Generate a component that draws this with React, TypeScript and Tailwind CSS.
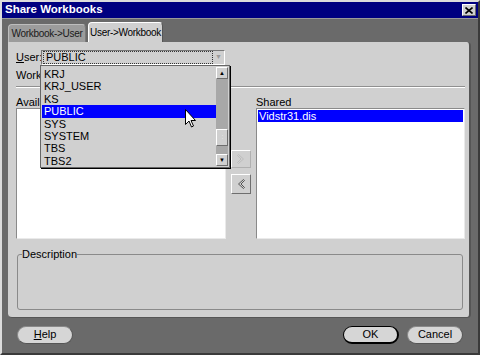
const users = ["KRJ", "KRJ_USER", "KS", "PUBLIC", "SYS", "SYSTEM", "TBS", "TBS2"];

function Bevel({ className = "", children }: { className?: string; children?: React.ReactNode }) {
  return (
    <div
      className={`border border-t-white border-l-white border-r-[#6e6e6e] border-b-[#6e6e6e] bg-[#d0d0d0] ${className}`}
    >
      {children}
    </div>
  );
}

function PillButton({ label, bold }: { label: React.ReactNode; bold?: boolean }) {
  return (
    <button
      className={`h-[18px] w-[56px] rounded-full bg-[#d6d6d6] text-[11px] text-black flex items-center justify-center border ${
        bold ? "border-black border-r-2 border-b-2" : "border-[#888] border-r-[#555] border-b-[#555]"
      }`}
    >
      {label}
    </button>
  );
}

export default function App() {
  return (
    <div className="w-[480px] h-[355px] bg-[#6a6a6a] border-2 border-t-[#dcdcdc] border-l-[#dcdcdc] border-r-[#3a3a3a] border-b-[#3a3a3a] flex flex-col font-['Liberation_Sans',Arial,sans-serif] text-[11px] text-black select-none overflow-hidden">
      {/* Title bar */}
      <div className="h-[16px] bg-[#000080] flex items-center justify-between pl-[3px] pr-[2px] shrink-0">
        <span className="text-white font-bold text-[11.5px] leading-none">Share Workbooks</span>
        <Bevel className="w-[14px] h-[12px] flex items-center justify-center">
          <svg width="8" height="7" viewBox="0 0 8 7">
            <path d="M0.5 0.5 L7.5 6.5 M7.5 0.5 L0.5 6.5" stroke="black" strokeWidth="1.6" />
          </svg>
        </Bevel>
      </div>
      <div className="h-px bg-[#9a9a9a] shrink-0" />

      {/* Tabs */}
      <div className="flex items-end pl-[6px] pt-[3px] h-[23px] shrink-0 whitespace-nowrap">
        <div className="w-[78px] h-[18px] bg-[#9c9c9c] rounded-t-[4px] border border-b-0 border-[#7a7a7a] border-t-[#bdbdbd] border-l-[#bdbdbd] flex items-center justify-center text-[#1a1a1a] text-[10px] tracking-[-0.3px]">
          Workbook-&gt;User
        </div>
        <div className="ml-[2px] w-[75px] h-[20px] bg-[#d0d0d0] rounded-t-[4px] border border-b-0 border-t-white border-l-white border-r-[#555] flex items-center justify-center text-[10px] tracking-[-0.3px]">
          User-&gt;Workbook
        </div>
      </div>

      {/* Panel */}
      <div className="relative mx-[6px] mr-[7px] h-[276px] bg-[#d0d0d0] rounded-b-[4px] rounded-tr-[4px] border-r-2 border-b border-r-[#555] border-b-[#555] flex flex-col pl-[8px] pr-[4px] pt-[8px] shrink-0">
        <div className="flex items-center h-[15px]">
          <span className="w-[25px]">
            <span className="underline">U</span>ser:
          </span>
          <div className="w-[184px] h-[15px] bg-[#d0d0d0] border border-[#777] border-b-white border-r-white flex items-center pr-[2px]">
            <span className="flex-1 ml-[1px] px-[2px] leading-[11px] border border-dotted border-[#333]">PUBLIC</span>
            <span className="ml-[2px] text-[#9a9a9a] text-[7px]">▼</span>
          </div>
        </div>
        <div className="mt-[3px] h-[14px] flex items-center whitespace-nowrap">Workbook:</div>
        <div className="mt-[4px] h-[2px] border-t border-[#909090] border-b border-b-white" />
        <div className="mt-[7px] h-[13px] flex items-end leading-none">
          <span className="w-[240px]">Available</span>
          <span>Shared</span>
        </div>
        <div className="flex h-[131px]">
          <div className="w-[210px] bg-white border border-[#8a8a8a] border-b-[#eaeaea] border-r-[#eaeaea]" />
          <div className="w-[30px] flex flex-col items-start pl-[5px] pt-[42px] gap-[6px]">
            <Bevel className="w-[20px] h-[18px] flex items-center justify-center border-t-[#eee] border-l-[#eee] border-r-[#b0b0b0] border-b-[#b0b0b0]">
              <svg width="8" height="10" viewBox="0 0 8 10">
                <path d="M1.5 0.5 L6.5 5 L1.5 9.5 L0.5 8.5 L4 5 L0.5 1.5 Z" stroke="#bcbcbc" strokeWidth="1" fill="none" />
              </svg>
            </Bevel>
            <Bevel className="w-[20px] h-[20px] flex items-center justify-center">
              <svg width="8" height="10" viewBox="0 0 8 10">
                <path d="M6.5 0.5 L1.5 5 L6.5 9.5 L7.5 8.5 L4 5 L7.5 1.5 Z" stroke="#555" strokeWidth="1" fill="none" />
              </svg>
            </Bevel>
          </div>
          <div className="flex-1 bg-white border border-[#8a8a8a] border-b-[#eaeaea] border-r-[#eaeaea] pt-px px-px">
            <div className="h-[12px] bg-[#0000ff] text-white leading-[12px] pl-px">Vidstr31.dis</div>
          </div>
        </div>
        <div className="relative mt-[15px] ml-px mr-[2px] h-[56px] border border-[#8a8a8a] rounded-[3px]">
          <span className="absolute -top-[6px] left-[4px] bg-[#d0d0d0] leading-none">Description</span>
        </div>

        {/* Open dropdown */}
        <div className="absolute left-[32px] top-[23px] w-[190px] h-[103px] bg-[#d0d0d0] border border-[#666] shadow-[1px_1px_0_#000] flex">
          <div className="flex-1 pt-[2px] pl-[1px]">
            {users.map((u) => (
              <div
                key={u}
                className={`h-[12.4px] leading-[12.4px] pl-[2px] ${u === "PUBLIC" ? "bg-[#0000ff] text-white" : ""}`}
              >
                {u}
              </div>
            ))}
          </div>
          <div className="w-[13px] flex flex-col py-[1px] pr-[1px]">
            <Bevel className="h-[12px] flex items-center justify-center text-[6px] leading-none">▲</Bevel>
            <div className="flex-1 bg-[#a8a8a8] flex flex-col">
              <div className="flex-1" />
              <Bevel className="h-[17px] flex items-center justify-center text-white text-[5px]">⁚</Bevel>
              <div className="h-[8px]" />
            </div>
            <Bevel className="h-[12px] flex items-center justify-center text-[6px] leading-none">▼</Bevel>
          </div>
        </div>

        {/* Mouse pointer */}
        <svg className="absolute left-[177px] top-[67px]" width="12" height="19" viewBox="0 0 12 19">
          <path
            d="M0.5 0.5 L0.5 15.5 L4 12 L6.5 18 L8.5 17 L6 11.5 L10.5 11.5 Z"
            fill="white"
            stroke="black"
            strokeWidth="1"
          />
        </svg>
      </div>

      {/* Footer */}
      <div className="flex items-center h-[35px] pl-[15px] pr-[15px] pb-[2px]">
        <PillButton label={<span><span className="underline">H</span>elp</span>} />
        <div className="flex-1" />
        <PillButton label="OK" bold />
        <div className="w-[8px]" />
        <PillButton label="Cancel" />
      </div>
    </div>
  );
}
